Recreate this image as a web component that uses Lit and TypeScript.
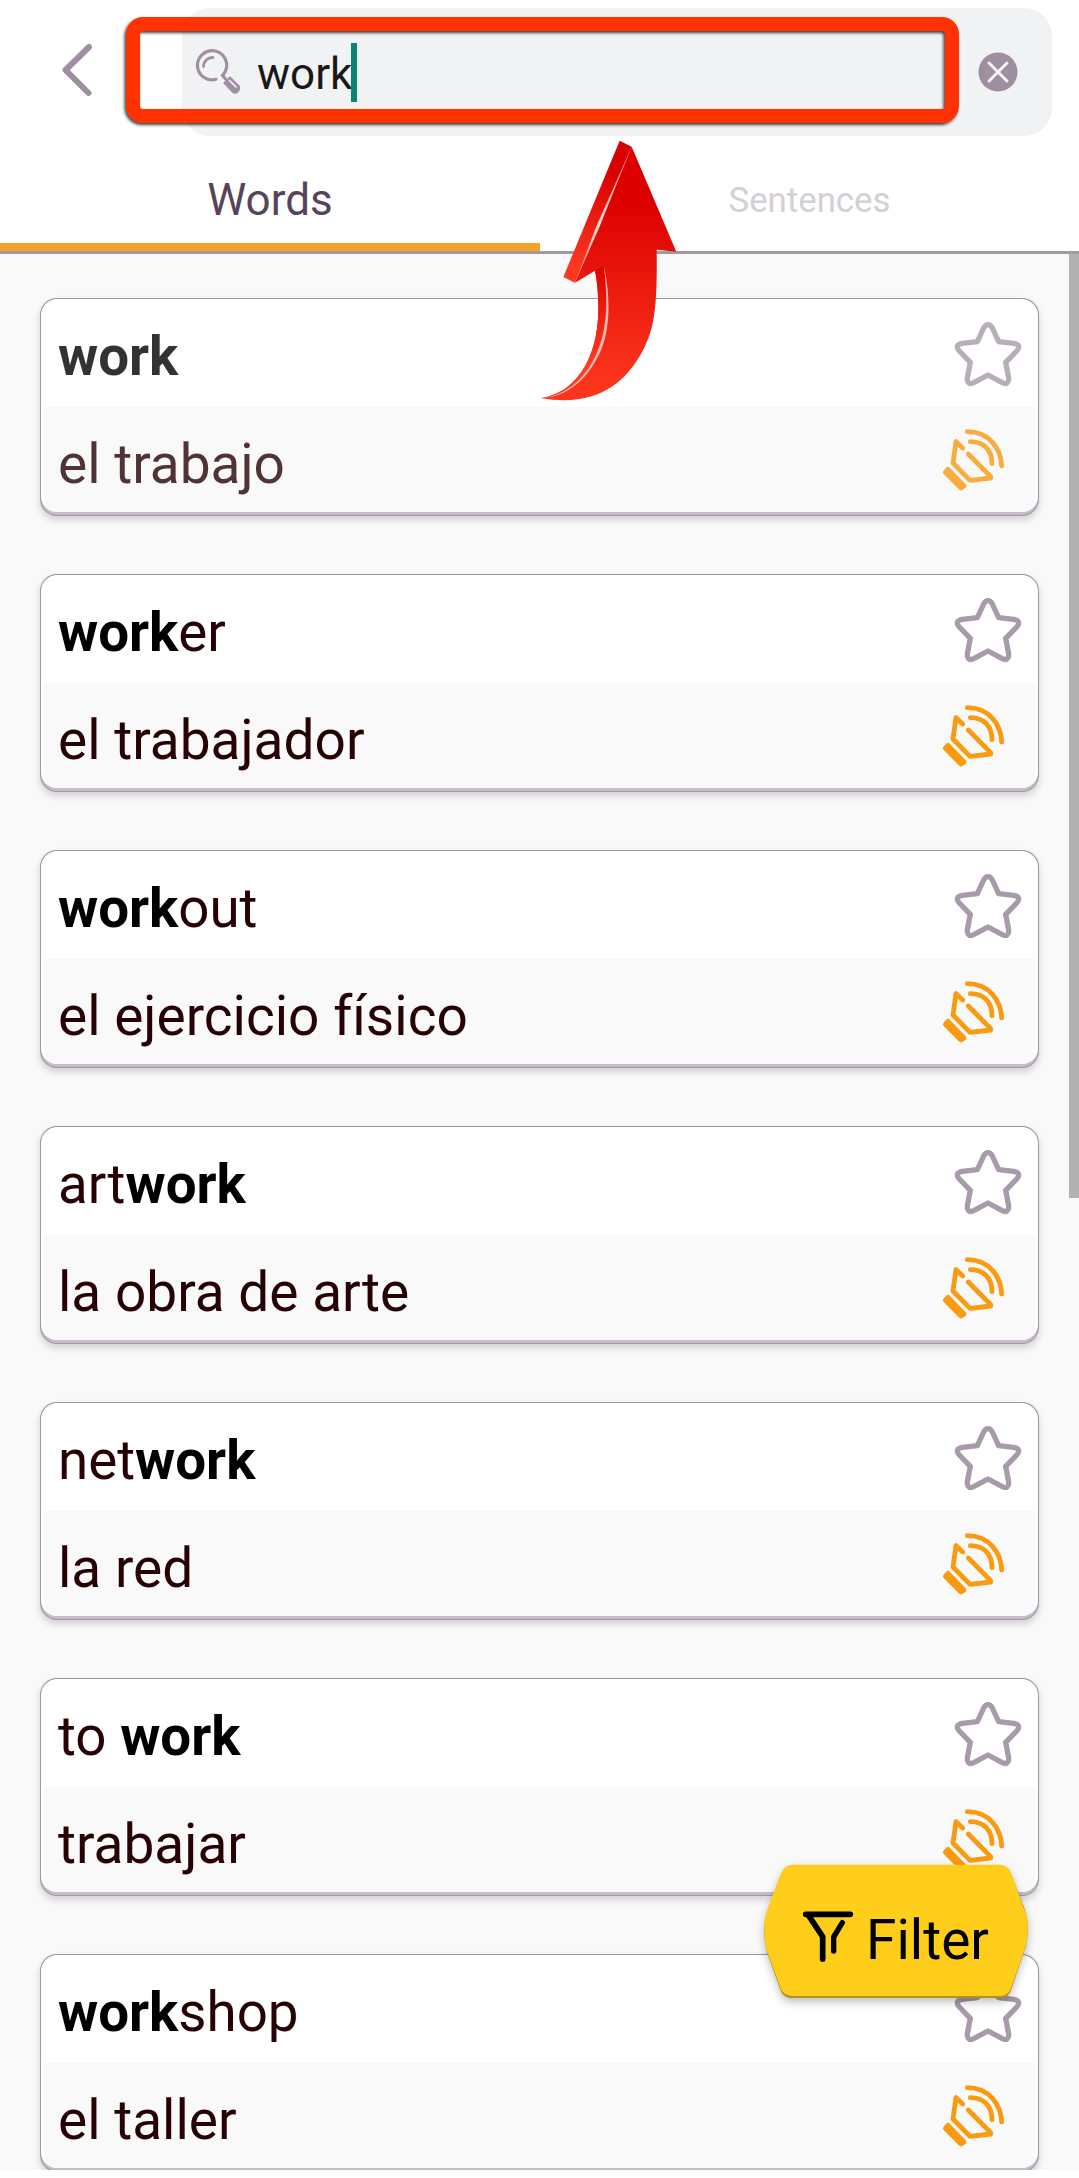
import { LitElement, html, css, svg } from "lit";
import { customElement, property } from "lit/decorators.js";

interface Entry {
  before: string;
  match: string;
  after: string;
  translation: string;
}

const ENTRIES: Entry[] = [
  { before: "", match: "work", after: "", translation: "el trabajo" },
  { before: "", match: "work", after: "er", translation: "el trabajador" },
  { before: "", match: "work", after: "out", translation: "el ejercicio físico" },
  { before: "art", match: "work", after: "", translation: "la obra de arte" },
  { before: "net", match: "work", after: "", translation: "la red" },
  { before: "to ", match: "work", after: "", translation: "trabajar" },
  { before: "", match: "work", after: "shop", translation: "el taller" },
];

@customElement("word-card")
class WordCard extends LitElement {
  @property({ attribute: false }) entry!: Entry;
  @property({ type: Boolean }) faded = false;

  static styles = css`
    :host {
      display: block;
      box-sizing: border-box;
      height: 218px;
      border-radius: 17px;
      background: #a295a6;
      padding: 1px;
      box-shadow: 0 4px 7px rgba(60, 50, 60, 0.2);
      font-family: Roboto, sans-serif;
    }
    .edge {
      height: 216px;
      border-radius: 16px;
      background: #c6bbc9;
      overflow: hidden;
    }
    .face {
      height: 213px;
      border-radius: 16px;
      background: #fff;
      overflow: hidden;
    }
    .row {
      display: flex;
      align-items: center;
      justify-content: space-between;
      box-sizing: border-box;
      color: #260204;
      font-size: 54.7px;
      line-height: 64px;
      white-space: pre;
    }
    .term {
      height: 108px;
      padding: 5px 12px 0 17px;
    }
    .translation {
      height: 105px;
      margin: 0 3px;
      padding: 8px 27px 0 14px;
      background: #f9f9f9;
      font-size: 55px;
    }
    .match {
      color: #000;
      font-weight: 700;
    }
    .star {
      width: 76px;
      height: 72px;
      margin-top: -3px;
    }
    .sound {
      width: 68px;
      height: 68px;
      margin-top: -7px;
    }
    .fade {
      opacity: 0.8;
    }
    svg {
      display: block;
      flex: none;
      overflow: visible;
    }
  `;

  render() {
    const e = this.entry;
    const fade = this.faded ? "fade" : "";
    return html`<div class="edge"><div class="face">
      <div class="row term"><span class=${fade}>${e.before}<span class="match">${e.match}</span>${e.after}</span>
        <svg class="star ${fade}" viewBox="150 115 228 216" fill="none" stroke="#a79aaa" stroke-width="16" stroke-linejoin="round">
          <path d="M264 135C258 135 254 139 251 145L232 186L187 191C172 193 167 202 178 214L211 248L202 295C201 309 209 315 221 309L264 286L307 309C319 315 327 309 326 295L317 248L350 214C361 202 356 193 341 191L296 186L277 145C274 139 270 135 264 135Z" />
        </svg>
      </div>
      <div class="row translation"><span class=${fade}>${e.translation}</span>
        <svg class="sound ${fade}" viewBox="120 440 204 204" fill="none" stroke="#f99a10" stroke-width="14.5" stroke-linecap="round" stroke-linejoin="round">
          <path d="M202 457C268 457 303 508 305 560M211 487C252 487 276 513 276 553" />
          <path d="M188 506L168 487L159 551L210 603L272 596V592L205 524" />
          <path d="M136 579L144 570L192 620L183 626Z" fill="#f99a10" />
        </svg>
      </div>
    </div></div>`;
  }
}

@customElement("app-root")
class AppRoot extends LitElement {
  static styles = css`
    :host {
      display: flex;
      flex-direction: column;
      position: relative;
      width: 1079px;
      height: 2178px;
      overflow: hidden;
      background: #fff;
      font-family: Roboto, sans-serif;
    }
    svg {
      display: block;
      overflow: visible;
    }
    .header {
      display: flex;
      height: 136px;
      padding: 8px 27px 0 61px;
      box-sizing: border-box;
      flex: none;
      align-items: flex-start;
    }
    .back {
      width: 34px;
      height: 56px;
      margin: 34px 87px 0 0;
    }
    .search {
      display: flex;
      flex: 1;
      align-items: center;
      height: 128px;
      box-sizing: border-box;
      padding: 0 34px 0 13px;
      border-radius: 28px;
      background: #f0f2f4;
    }
    .lens {
      width: 48px;
      height: 48px;
    }
    .query {
      margin-left: 14px;
      font-size: 44px;
      line-height: 60px;
      color: #181818;
      padding-top: 4px;
    }
    .caret {
      width: 6px;
      height: 59px;
      background: #0b8474;
      margin-left: -1px;
    }
    .clear {
      width: 40px;
      height: 40px;
      margin-left: auto;
    }
    .tabs {
      display: grid;
      grid-template-columns: 540px 539px;
      height: 118px;
      box-sizing: border-box;
      border-bottom: 3px solid #a198a4;
      flex: none;
    }
    .tab {
      display: flex;
      justify-content: center;
      align-items: center;
      box-sizing: border-box;
      padding-top: 21px;
      font-size: 34.8px;
      color: #d3cfd5;
      border-bottom: 8px solid transparent;
    }
    .tab.active {
      font-size: 44px;
      color: #55445a;
      border-bottom-color: #f0a328;
      padding-top: 21px;
    }
    .list {
      display: flex;
      flex-direction: column;
      gap: 58px;
      box-sizing: border-box;
      height: 1916px;
      padding: 44px 40px 0;
      background: #f9f9f9;
      overflow: hidden;
      flex: none;
    }
    .list word-card {
      flex: none;
    }
    .thumb {
      position: absolute;
      top: 254px;
      right: 0;
      width: 10px;
      height: 944px;
      background: #b1b1b1;
    }
    .frame {
      position: absolute;
      left: 126px;
      top: 17px;
      width: 833px;
      height: 106px;
    }
    .arrow {
      position: absolute;
      left: 520px;
      top: 120px;
      width: 180px;
      height: 300px;
    }
    .filter {
      position: absolute;
      left: 764px;
      top: 1864px;
      width: 264px;
      height: 134px;
      display: flex;
      align-items: center;
      box-sizing: border-box;
      padding: 11px 0 0 36px;
      color: #000;
      font-size: 55px;
      line-height: 64px;
    }
    .plate {
      position: absolute;
      inset: 0;
      width: 264px;
      height: 134px;
      filter: drop-shadow(0 4px 4px rgba(0, 0, 0, 0.25));
    }
    .funnel {
      position: relative;
      width: 56px;
      height: 56px;
      flex: none;
    }
    .label {
      position: relative;
      margin-left: 10px;
      padding-top: 7px;
    }
  `;

  private frame() {
    return svg`
      <defs><filter id="fs" x="-5%" y="-20%" width="110%" height="140%">
        <feDropShadow dx="-1.5" dy="2" stdDeviation="1.7" flood-color="#000" flood-opacity=".75" />
      </filter></defs>
      <path filter="url(#fs)" fill="#ff3203" fill-rule="evenodd"
        d="M17 0H816A17 17 0 0 1 833 17V89A17 17 0 0 1 816 106H17A17 17 0 0 1 0 89V17A17 17 0 0 1 17 0ZM17 14A3 3 0 0 0 14 17V89A3 3 0 0 0 17 92H816A3 3 0 0 0 819 89V17A3 3 0 0 0 816 14Z" />`;
  }

  render() {
    return html`
      <div class="header">
        <svg class="back" viewBox="61 42 34 56" fill="none" stroke="#9e8fa1" stroke-width="6" stroke-linecap="round" stroke-linejoin="round">
          <path d="M89 47L65.500 70L88.500 93" />
        </svg>
        <div class="search">
          <svg class="lens" viewBox="195 48 48 48" fill="none" stroke="#a08fa3" stroke-linecap="round">
            <path d="M216 79.300A14.600 14.600 0 1 1 225 72L222.500 75.500L225.500 79" stroke-width="3.200" />
            <path d="M203.500 66.500A9 9 0 0 1 213 57.500" stroke-width="2.800" />
            <path d="M224.500 83L230 77.500L239 86.500Q240 89 237 92Q235 93.500 233 92Z" fill="#a08fa3" stroke-width="2" stroke-linejoin="round" />
            <path d="M229.500 80.500L236 87" stroke="#f0f2f4" stroke-width="1.700" />
          </svg>
          <span class="query">work</span>
          <span class="caret"></span>
          <svg class="clear" viewBox="0 0 40 40">
            <circle cx="20" cy="20" r="19.500" fill="#9e8fa0" />
            <path d="M11 11L29 29M29 11L11 29" stroke="#f7f4f8" stroke-width="3" stroke-linecap="round" />
          </svg>
        </div>
      </div>
      <div class="tabs">
        <div class="tab active">Words</div>
        <div class="tab">Sentences</div>
      </div>
      <div class="list">
        ${ENTRIES.map((e, i) => html`<word-card .entry=${e} ?faded=${i === 0}></word-card>`)}
      </div>
      <div class="thumb"></div>
      <svg class="frame" viewBox="0 0 833 106">${this.frame()}</svg>
      <svg class="arrow" viewBox="0 0 540 900">
        <defs>
          <linearGradient id="front" gradientUnits="userSpaceOnUse" x1="0" y1="240" x2="0" y2="780">
            <stop offset="0" stop-color="#dc0000" />
            <stop offset="1" stop-color="#fb351d" />
          </linearGradient>
          <linearGradient id="side" gradientUnits="userSpaceOnUse" x1="0" y1="150" x2="0" y2="440">
            <stop offset="0" stop-color="#d90000" />
            <stop offset="1" stop-color="#fd3820" />
          </linearGradient>
          <linearGradient id="tail" gradientUnits="userSpaceOnUse" x1="0" y1="440" x2="0" y2="740">
            <stop offset="0" stop-color="#dc0400" />
            <stop offset="1" stop-color="#ff3c24" />
          </linearGradient>
          <linearGradient id="shine" gradientUnits="userSpaceOnUse" x1="0" y1="80" x2="0" y2="488">
            <stop offset="0" stop-color="#f37b74" />
            <stop offset=".58" stop-color="#ffe0dc" />
            <stop offset="1" stop-color="#ff6b59" />
          </linearGradient>
        </defs>
        <path fill="url(#front)" d="M335 80L469 395L410 389C412 560 404 620 372 685C310 808 210 860 62 834C155 824 235 730 235 565C235 520 231 480 225 452L165 488Z" />
        <path fill="url(#tail)" d="M225 452L252 436C266 510 268 590 250 655C218 760 150 822 62 834C155 824 235 730 235 565C235 520 231 480 225 452Z" />
        <path fill="#ffb9ae" d="M251 434C272 530 270 620 247 680C212 770 150 824 75 834C150 818 205 768 238 680C262 615 264 530 251 434Z" />
        <path fill="url(#side)" d="M299 62L335 80L165 488L130 471Z" />
        <path fill="url(#shine)" d="M335 80L238 322L165 488L228 322Z" />
      </svg>
      <div class="filter">
        <svg class="plate" viewBox="72 252 792 402">
          <path fill="#b39121" d="M160 258H778C798 258 807 269 815 286L855 389C866 420 866 460 857 501L813 631C806 648 795 654 780 654H160C140 654 128 648 121 629L82 520C70 480 70 430 80 399L120 292C128 269 140 258 160 258Z" />
          <path fill="#ffce1b" d="M160 254H778C798 254 807 265 815 282L851 385C867 410 866 460 857 497L813 625C806 641 795 648 780 648H160C140 648 128 641 121 622L82 515C70 480 70 430 80 395L120 288C128 265 140 254 160 254Z" />
        </svg>
        <svg class="funnel" viewBox="180 388 168 168" fill="none" stroke="#000" stroke-width="17" stroke-linecap="round" stroke-linejoin="round">
          <path d="M197 404H331M206 408L248 471V538" />
          <path d="M307 429L281 472V514" stroke-width="16" />
        </svg>
        <span class="label">Filter</span>
      </div>
    `;
  }
}
